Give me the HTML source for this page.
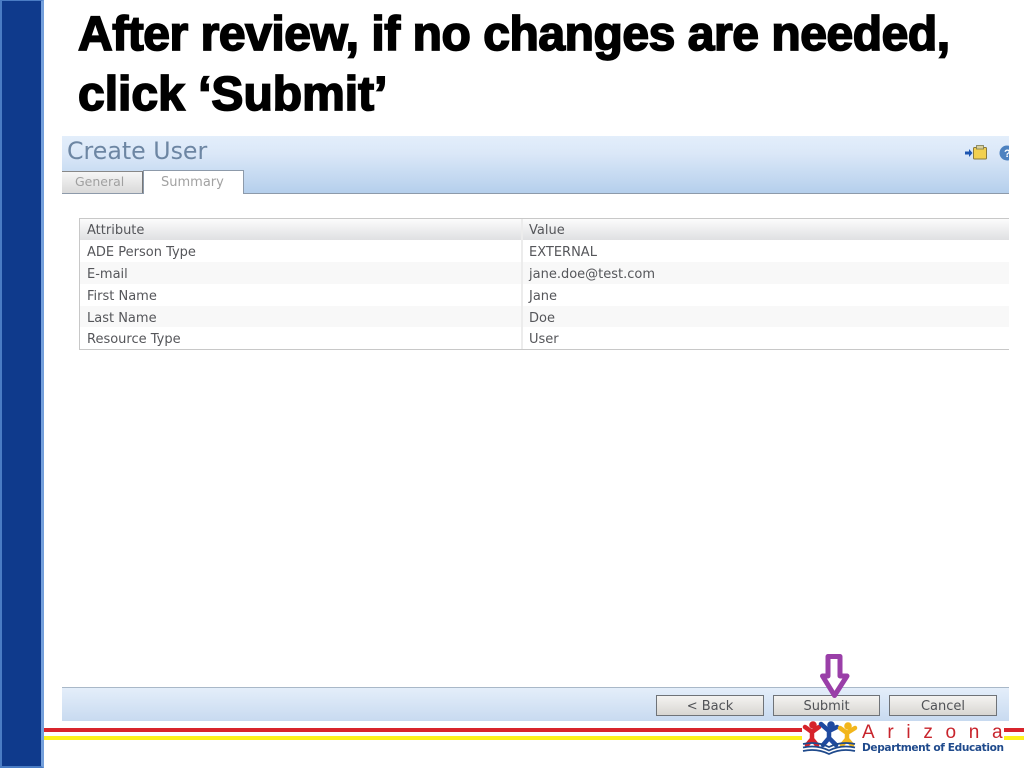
<!DOCTYPE html>
<html><head><meta charset="utf-8"><style>
html,body{margin:0;padding:0;background:#fff}
body{width:1024px;height:768px;position:relative;overflow:hidden;font-family:"DejaVu Sans","Liberation Sans",sans-serif}
div,span.a{position:absolute}
.t{position:absolute;white-space:nowrap;font-family:"Liberation Sans",sans-serif;font-weight:bold;font-size:48px;line-height:60px;color:#000;-webkit-text-stroke:1.7px #000;left:78px}
.u{position:absolute;white-space:nowrap;font-size:13px;line-height:16px;color:#55565a;filter:blur(.3px)}
.btn{position:absolute;top:695px;height:19px;border:1px solid #6f7378;background:linear-gradient(#f4f3f1,#d8d6d2);text-align:center;font-size:13px;line-height:21px;color:#505256;filter:blur(.25px)}
</style></head><body>
<div style="left:0;top:0;width:44px;height:768px;background:#0f3a8c;box-sizing:border-box;border:2px solid #4a7cc4;border-right:3px solid #74a0dc;border-top-width:1px"></div>

<span class="t" style="top:5px;letter-spacing:-.45px">After review, if no changes are needed,</span>
<span class="t" style="top:65px">click ‘Submit’</span>

<div style="left:62px;top:136px;width:947px;height:58px;background:linear-gradient(#e3eefb,#dbe8f8 30%,#b5cfec);border-bottom:1px solid #8d9aaa;box-sizing:border-box"></div>
<span class="u" style="left:67px;top:137px;font-size:23.700px;line-height:28px;color:#6d86a3">Create User</span>
<div style="left:62px;top:171px;width:81px;height:22px;background:linear-gradient(#f6f6f6,#d9d9d9);border-top:1px solid #888;border-right:1px solid #777;box-sizing:border-box"></div>
<div style="left:143px;top:170px;width:101px;height:24px;background:#fff;border:1px solid #8d9aaa;border-bottom:none;box-sizing:border-box"></div>
<span class="u" style="left:75px;top:174px;font-size:12.500px;color:#a0a0a0">General</span>
<span class="u" style="left:161px;top:175px;color:#a2a2a2">Summary</span>

<svg style="position:absolute;left:964px;top:144px" width="45" height="18" viewBox="0 0 45 18">
<path d="M1 7.500h4V5l3.500 4-3.500 4v-2.500H1z" fill="#1d55b0"/>
<rect x="9.500" y="3.500" width="13" height="11.500" rx="1" fill="#f2d050" stroke="#8a7a3c"/>
<rect x="12.500" y="1.500" width="7" height="3.500" fill="#d9cf9a" stroke="#7a7a50" stroke-width=".8"/>
<circle cx="43" cy="9" r="7.500" fill="#4d82c0"/>
<text x="40" y="13" font-family="Liberation Sans" font-size="11" font-weight="bold" fill="#fff">?</text>
</svg>

<div style="left:79px;top:218px;width:930px;height:132px;border:1px solid #c8c8c8;border-right:none;box-sizing:border-box;background:#fff"></div>
<div style="left:80px;top:219px;width:929px;height:21px;background:linear-gradient(#fcfcfc,#dfe0e2)"></div>
<div style="left:80px;top:262px;width:929px;height:22px;background:#f8f8f8"></div>
<div style="left:80px;top:306px;width:929px;height:21px;background:#f8f8f8"></div>
<div style="left:521px;top:219px;width:2px;height:130px;background:#ececec"></div>

<span class="u" style="left:87px;top:223px">Attribute</span>
<span class="u" style="left:87px;top:245px">ADE Person Type</span>
<span class="u" style="left:87px;top:267px">E-mail</span>
<span class="u" style="left:87px;top:289px">First Name</span>
<span class="u" style="left:87px;top:311px">Last Name</span>
<span class="u" style="left:87px;top:332px">Resource Type</span>
<span class="u" style="left:529px;top:223px">Value</span>
<span class="u" style="left:529px;top:245px">EXTERNAL</span>
<span class="u" style="left:529px;top:267px">jane.doe@test.com</span>
<span class="u" style="left:529px;top:289px">Jane</span>
<span class="u" style="left:529px;top:311px">Doe</span>
<span class="u" style="left:529px;top:332px">User</span>

<div style="left:62px;top:687px;width:947px;height:34px;background:linear-gradient(#e4eefa,#c8daf0);border-top:1px solid #a9b8c8;box-sizing:border-box"></div>
<div class="btn" style="left:656px;width:106px">&lt; Back</div>
<div class="btn" style="left:773px;width:105px">Submit</div>
<div class="btn" style="left:889px;width:106px">Cancel</div>

<svg style="position:absolute;left:818px;top:652px" width="34" height="48" viewBox="0 0 34 48">
<path d="M10 4.500h12v19.500h7L16.500 43.500 4.500 24h5.500z" fill="#fff" stroke="#9a3fa8" stroke-width="5" stroke-linejoin="round"/>
</svg>

<div style="left:44px;top:728px;width:758px;height:4px;background:#d8242c"></div>
<div style="left:44px;top:736px;width:758px;height:4px;background:#fdf21c"></div>
<div style="left:1003px;top:728px;width:21px;height:4px;background:#d8242c"></div>
<div style="left:1003px;top:736px;width:21px;height:4px;background:#fdf21c"></div>
<div style="left:802px;top:721px;width:202px;height:34px;background:#fff"></div>

<svg style="position:absolute;left:802px;top:720px" width="62" height="36" viewBox="0 0 62 36">
<g fill="none" stroke-linecap="round" stroke-linejoin="round" stroke-width="4.500">
<g stroke="#d6232b"><path d="M3 7l7 5 7-5M10 12v7M10 19l-5 6M10 19l5 6"/></g>
<g stroke="#1f4aa0"><path d="M19 4l8 7 8-4M27 11v7M27 18l-6 7M27 18l7 7"/></g>
<g stroke="#f2b61c"><path d="M38 8l7 5 8-5M45 13v6M45 19l-5 6M45 19l5 6"/></g>
</g>
<circle cx="11" cy="5" r="3.800" fill="#d6232b"/><circle cx="29" cy="5" r="3.800" fill="#1f4aa0"/><circle cx="46" cy="6" r="3.800" fill="#f2b61c"/>
<g fill="none" stroke="#1f4a8c" stroke-width="1.800">
<path d="M1 24c9-2 18-1 26 3 8-4 17-5 26-3"/><path d="M1 27.500c9-2 18-1 26 3 8-4 17-5 26-3"/><path d="M1 31c9-2 18-1 26 3 8-4 17-5 26-3"/>
</g>
</svg>
<span class="a" style="left:862px;top:721px;white-space:nowrap;font-family:'Liberation Sans',sans-serif;font-size:19px;line-height:24px;letter-spacing:12.700px;color:#c8242c">Arizona</span>
<span class="a" style="left:862px;top:741px;white-space:nowrap;font-family:'DejaVu Sans',sans-serif;font-weight:bold;font-size:10.600px;line-height:15px;letter-spacing:-.38px;color:#1f4a8c">Department of Education</span>
</body></html>
